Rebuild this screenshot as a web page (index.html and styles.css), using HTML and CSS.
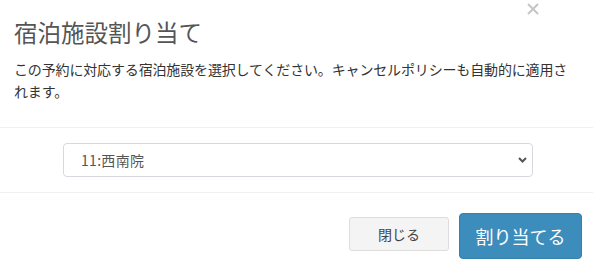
FILE: index.html
```html
<!DOCTYPE html>
<html lang="ja">
<head>
<meta charset="utf-8">
<title>宿泊施設割り当て</title>
<link rel="stylesheet" href="styles.css">
</head>
<body>
<div class="modal">
  <div class="modal-header">
    <button class="close" type="button" aria-label="閉じる">
      <svg width="12" height="12" viewBox="0 0 12 12"><path d="M1 1 L11 11 M11 1 L1 11" stroke="#c6c6c6" stroke-width="2" fill="none"/></svg>
    </button>
    <h4 class="modal-title">宿泊施設割り当て</h4>
    <p class="modal-desc">この予約に対応する宿泊施設を選択してください。キャンセルポリシーも自動的に適用されます。</p>
  </div>
  <div class="modal-body">
    <div class="select-wrap">
      <select class="form-control">
        <option>11:西南院</option>
      </select>
      <svg class="chevron" width="9" height="6" viewBox="0 0 9 6"><path d="M1 1 L4.5 4.5 L8 1" stroke="#555" stroke-width="2" fill="none"/></svg>
    </div>
  </div>
  <div class="modal-footer">
    <button class="btn btn-default" type="button">閉じる</button>
    <button class="btn btn-primary btn-lg" type="button">割り当てる</button>
  </div>
</div>
</body>
</html>
```

FILE: styles.css
```css
html, body {
  margin: 0;
  padding: 0;
  background: #fff;
}
body {
  font-family: "Noto Sans CJK JP", "Noto Sans", sans-serif;
  font-size: 14px;
  color: #333;
}
.modal {
  width: 593px;
}
.modal-header {
  position: relative;
  padding: 15px 15px 15px 14px;
  border-bottom: 1px solid #f0f0f0;
}
.close {
  position: absolute;
  top: 3px;
  right: 54px;
  padding: 0;
  margin: 0;
  border: 0;
  background: transparent;
  line-height: 0;
  cursor: pointer;
}
.modal-title {
  margin: 0;
  font-size: 23.5px;
  font-weight: 400;
  line-height: 34px;
  color: #555;
}
.modal-desc {
  margin: 9px 0 10px;
  line-height: 22px;
  color: #333;
  letter-spacing: -0.15px;
}
.modal-body {
  padding: 15px 15px;
  border-bottom: 1px solid #f0f0f0;
}
.select-wrap {
  position: relative;
  width: 470px;
  margin-left: 48px;
}
.form-control {
  display: block;
  width: 100%;
  height: 34px;
  box-sizing: border-box;
  padding: 0 24px 0 17px;
  font-family: "Noto Sans CJK JP", "Noto Sans", sans-serif;
  font-size: 14px;
  color: #555;
  background: #fff;
  border: 1px solid #d6d8de;
  border-radius: 4px;
  appearance: none;
  -webkit-appearance: none;
  letter-spacing: 0.3px;
}
.chevron {
  position: absolute;
  right: 6px;
  top: 14px;
  pointer-events: none;
}
.modal-footer {
  display: flex;
  justify-content: flex-end;
  align-items: flex-start;
  gap: 10px;
  padding: 20px 11px 14px 15px;
}
.btn {
  box-sizing: border-box;
  font-family: "Noto Sans CJK JP", "Noto Sans", sans-serif;
  border-radius: 3px;
  cursor: pointer;
  margin: 0;
  white-space: nowrap;
  text-align: center;
}
.btn-default {
  margin-top: 4px;
  width: 100px;
  height: 34px;
  padding: 0;
  font-size: 14px;
  color: #444;
  background: #f4f4f4;
  border: 1px solid #ddd;
}
.btn-primary {
  color: #fff;
  background: #3c8dbc;
  border: 1px solid #367fa9;
}
.btn-lg {
  width: 123px;
  height: 46px;
  padding: 0;
  font-size: 18px;
  border-radius: 4px;
}
```
